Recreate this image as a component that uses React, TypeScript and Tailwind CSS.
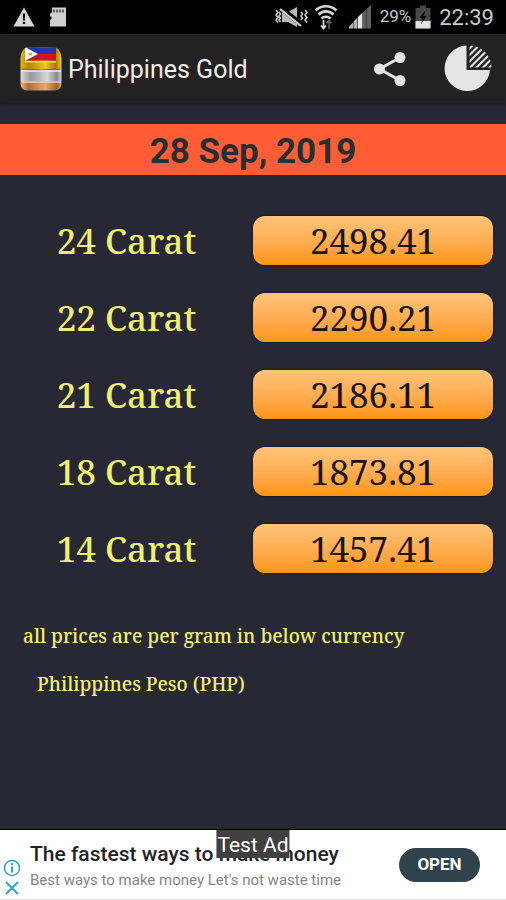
const prices = [
  { carat: '24 Carat', price: '2498.41' },
  { carat: '22 Carat', price: '2290.21' },
  { carat: '21 Carat', price: '2186.11' },
  { carat: '18 Carat', price: '1873.81' },
  { carat: '14 Carat', price: '1457.41' },
]

function WarningIcon() {
  return (
    <svg width="22" height="20" viewBox="0 0 22 20" aria-hidden="true">
      <path d="M11 0.5L21.5 19.5H0.5Z" fill="#d6d6d6" />
      <path d="M9.8 6.5h2.4l-.4 7h-1.6zM9.9 14.8h2.2v2.2H9.9z" fill="#000" />
    </svg>
  )
}

function SdCardIcon() {
  return (
    <svg width="18" height="20" viewBox="0 0 18 20" aria-hidden="true">
      <path d="M3 0.5H17V19.5H1V13l1.5-1V9.5H1V7l2-2Z" fill="#cfcfcf" />
      <path d="M5 2.5v3M8 2.5v3M11 2.5v3M14 2.5v3" stroke="#333" strokeWidth="1.4" />
    </svg>
  )
}

function VibrateMuteIcon() {
  return (
    <svg width="34" height="20" viewBox="0 0 34 20" fill="none" aria-hidden="true">
      <path d="M8 5h6l9-5v20l-9-5H8z" fill="#b8b8b8" />
      <path d="M7 1l21 17" stroke="#000" strokeWidth="5" />
      <path d="M6 2l21 17" stroke="#d0d0d0" strokeWidth="2.2" />
      <path
        d="M2 3l2 2.5-2 2.5 2 2.5-2 2.5 2 2.5M5 5l1.5 2-1.5 2 1.5 2-1.5 2 1.5 2M31 3l2 2.5-2 2.5 2 2.5-2 2.5 2 2.5M27 5l1.5 2-1.5 2 1.5 2-1.5 2"
        stroke="#c4c4c4"
        strokeWidth="1.6"
      />
    </svg>
  )
}

function WifiIcon() {
  return (
    <svg width="24" height="26" viewBox="0 0 24 26" fill="none" aria-hidden="true">
      <path
        d="M1.5 6.500a15 15 0 0 1 21 0M4.5 10.500a10.5 10.5 0 0 1 15 0M7.5 14.500a6.5 6.5 0 0 1 9 0"
        stroke="#d4d4d4"
        strokeWidth="2.6"
      />
      <path d="M9.5 16v8M7 21.5l2.5 3 2.5-3" stroke="#d8d8d8" strokeWidth="1.8" />
      <path d="M15 25v-8M12.5 19.5l2.5-3 2.5 3" stroke="#666" strokeWidth="1.5" />
    </svg>
  )
}

function SignalIcon() {
  return (
    <svg width="24" height="24" viewBox="0 0 24 24" aria-hidden="true">
      <path d="M1 23.5v-2l4-4v6zM5.500 23.5v-7l4-4v11z" fill="#b4b4b4" />
      <path d="M10 23.5v-11.500l4.500-4.500v16z" fill="#e4e4e4" />
      <path d="M15 23.5V7.500l3.5-3.500v19.500zM18.800 23.5V3.800l4.200-3.800v23.500z" fill="#606060" />
    </svg>
  )
}

function BatteryIcon() {
  return (
    <svg width="16" height="24" viewBox="0 0 16 24" aria-hidden="true">
      <path d="M5 0.5h6v2.5h4.5v20.5H0.5V3H5z" fill="#484848" />
      <path d="M0.5 16h15v7.5h-15z" fill="#e4e4e4" />
      <path d="M9.5 6L4.5 13h3l-1.5 6.5 5.5-8.5h-3l2-5z" fill="#080808" />
    </svg>
  )
}

function GoldBarsLogo() {
  return (
    <svg width="42" height="44" viewBox="0 0 42 44" aria-hidden="true">
      <defs>
        <linearGradient id="gold" x1="0" x2="1">
          <stop offset="0" stopColor="#e9bc20" />
          <stop offset="0.2" stopColor="#b98300" />
          <stop offset="0.6" stopColor="#efc42c" />
          <stop offset="0.85" stopColor="#a77905" />
          <stop offset="1" stopColor="#f2d13c" />
        </linearGradient>
        <linearGradient id="silver" x1="0" x2="1">
          <stop offset="0" stopColor="#e2e2e2" />
          <stop offset="0.25" stopColor="#999" />
          <stop offset="0.65" stopColor="#d5d5d5" />
          <stop offset="0.88" stopColor="#888" />
          <stop offset="1" stopColor="#ddd" />
        </linearGradient>
        <linearGradient id="bronze" x1="0" x2="1">
          <stop offset="0" stopColor="#e8b982" />
          <stop offset="0.2" stopColor="#a96f3c" />
          <stop offset="0.6" stopColor="#dfac74" />
          <stop offset="0.88" stopColor="#996333" />
          <stop offset="1" stopColor="#e0ad78" />
        </linearGradient>
        <clipPath id="bars">
          <path d="M6 .5H36Q40 2 41.5 10V37Q41 43 35 43.5H7Q1 43 .5 37V10Q2 2 6 .5Z" />
        </clipPath>
      </defs>
      <g clipPath="url(#bars)">
        <path d="M0 0h42v23H0z" fill="url(#gold)" />
        <path d="M0 23h42v11H0z" fill="url(#silver)" />
        <path d="M0 34h42v10H0z" fill="url(#bronze)" />
        <path d="M5 14h31v1.5H5z" fill="#ffdf4a" />
        <path d="M2 22q19 2 38 0" stroke="#8a6410" fill="none" />
        <path d="M1 24h40" stroke="#e8e8e8" strokeWidth="1.5" />
        <path d="M1 35h40" stroke="#f4d3aa" strokeWidth="1.5" />
        <path d="M5 0h31v7H5z" fill="#1737b4" />
        <path d="M5 7h31v6.5H5z" fill="#c91522" />
        <path d="M5 0l13 7L5 14z" fill="#fff" />
        <circle cx="10.5" cy="7" r="1.8" fill="#f0ad20" />
      </g>
    </svg>
  )
}

function ShareIcon() {
  return (
    <svg width="34" height="36" viewBox="0 0 34 36" aria-hidden="true">
      <path d="M27 6.5L6.5 18L27 29.5" fill="none" stroke="#e4e4e4" strokeWidth="3" />
      <circle cx="27" cy="6.5" r="5.5" fill="#e4e4e4" />
      <circle cx="6.5" cy="18" r="5.5" fill="#e4e4e4" />
      <circle cx="27" cy="29.5" r="5.5" fill="#e4e4e4" />
    </svg>
  )
}

function PieIcon() {
  return (
    <svg width="48" height="48" viewBox="0 0 48 48" aria-hidden="true">
      <defs>
        <clipPath id="slice">
          <path d="M25.5 0.500A22 22 0 0 1 47.5 22.500H25.5Z" />
        </clipPath>
      </defs>
      <path d="M22.5 0.500A22.75 22.75 0 1 0 46 25H22.5Z" fill="#e4e4e4" />
      <path
        d="M24 5l7-7M24 11.500L38-2.500M24 18L44-2M24.500 24L48 .5M31 24L51 4M37.500 24L51 10.500M44 24l8-8"
        stroke="#dedede"
        strokeWidth="2.2"
        clipPath="url(#slice)"
      />
    </svg>
  )
}

export default function App() {
  return (
    <div className="flex min-h-screen flex-col bg-[#282834] font-[Roboto,sans-serif]">
      <div className="flex h-[34px] items-center bg-black pr-3 pl-[13px] text-[#c8c8c8]">
        <WarningIcon />
        <span className="ml-3.5">
          <SdCardIcon />
        </span>
        <div className="ml-auto flex items-center">
          <VibrateMuteIcon />
          <span className="ml-1.5">
            <WifiIcon />
          </span>
          <span className="ml-2.5">
            <SignalIcon />
          </span>
          <span className="ml-2 text-[17px]">29%</span>
          <span className="ml-1">
            <BatteryIcon />
          </span>
          <span className="ml-2 text-[22px]">22:39</span>
        </div>
      </div>

      <header className="flex h-[69px] items-center bg-[#222] pr-[14px] pl-5 shadow-[0_1px_3px_#191920]">
        <GoldBarsLogo />
        <h1 className="mt-0.5 ml-1.5 text-[25px] text-[#f0f0f0]">Philippines Gold</h1>
        <button type="button" aria-label="Share" className="ml-auto">
          <ShareIcon />
        </button>
        <button type="button" aria-label="Chart" className="ml-[37px]">
          <PieIcon />
        </button>
      </header>

      <main>
        <h2 className="mt-[21px] bg-[#ff5d35] pt-1 text-center text-[35px] leading-[47px] font-bold text-[#263032]">
          28 Sep, 2019
        </h2>

        <table className="mt-[27px] w-full table-fixed font-['Noto_Serif',serif] text-[35px]">
          <tbody>
            {prices.map(({ carat, price }) => (
              <tr key={carat} className="h-[77px]">
                <th scope="row" className="px-0 pt-0.5 pb-0 font-medium text-[#f0f070]">
                  {carat}
                </th>
                <td className="py-0 pr-[13px] pl-0">
                  <div className="rounded-xl bg-linear-to-b from-[#ffc47a] to-[#ff960c] pt-px text-center leading-[48px] text-[#1c1208] shadow-[0_0_2px_#080820]">
                    {price}
                  </div>
                </td>
              </tr>
            ))}
          </tbody>
        </table>

        <div className="mt-[37px] px-[23px] font-['Noto_Serif',serif] text-[19px] leading-6 font-medium text-[#f0f070]">
          <p>all prices are per gram in below currency</p>
          <p className="mt-6 pl-3.5">Philippines Peso (PHP)</p>
        </div>
      </main>

      <aside className="relative mt-auto flex h-[71px] items-center border-t border-b border-t-black border-b-[#ddd] bg-white">
        <div className="flex w-[30px] flex-col items-start gap-1 self-end pb-1 pl-[3px]">
          <button type="button" aria-label="Ad info">
            <svg width="18" height="18" viewBox="0 0 18 18" fill="none" stroke="#27a9c9" aria-hidden="true">
              <circle cx="9" cy="9" r="7.5" strokeWidth="1.5" />
              <path d="M9 7.5v6M9 4v2" strokeWidth="2" />
            </svg>
          </button>
          <button type="button" aria-label="Close ad" className="pl-0.5">
            <svg width="14" height="14" viewBox="0 0 14 14" stroke="#27a9c9" strokeWidth="2" aria-hidden="true">
              <path d="M1 1l12 12M13 1L1 13" />
            </svg>
          </button>
        </div>
        <div>
          <p className="pt-0.5 text-[21px] leading-7 font-medium text-[#202426]">The fastest ways to make money</p>
          <p className="text-[15px] leading-6 text-[#858585]">Best ways to make money Let's not waste time</p>
        </div>
        <button
          type="button"
          className="mr-[26px] ml-auto h-[34px] w-[81px] rounded-full bg-[#30434c] text-[17px] font-bold text-white"
        >
          OPEN
        </button>
        <span className="absolute top-0 left-1/2 -translate-x-1/2 bg-[#404040] px-px pt-0.5 text-[21px] leading-[26px] whitespace-nowrap text-white">
          Test Ad
        </span>
      </aside>
    </div>
  )
}
